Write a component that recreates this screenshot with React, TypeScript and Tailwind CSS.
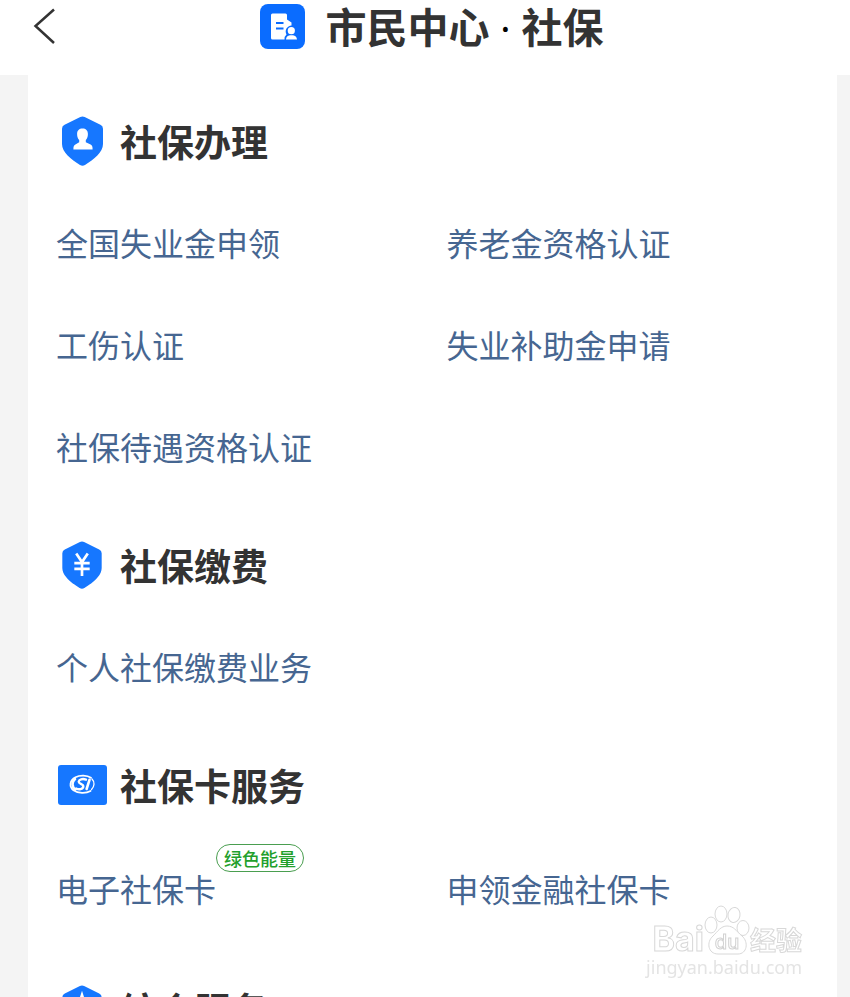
import type { ReactNode } from "react";
import clsx from "clsx";

type Service = { name: string; tag?: string };
type Section = { title: string; icon: ReactNode; services: Service[] };

const SHIELD = "M18.3 1.1Q20.5 0 22.7 1.1L38.4 8.8Q41 10 41 12.8V28C41 36 32 43.5 23 48.9Q20.5 50.4 18 48.9C9 43.5 0 36 0 28V12.8Q0 10 2.6 8.8Z";

function PersonShield() {
  return (
    <svg width="41" height="50" viewBox="0 0 41 50" aria-hidden="true">
      <path d={SHIELD} fill="#1677ff" />
      <path
        d="M20.5 12.5c3.300 0 5.400 2 5.400 5.400 0 2.600-.8 4.900-2.100 6.200v2.200l4.800 2.200c1.600.8 2 2 2 5H11.400c0-3 .4-4.200 2-5l3.800-2.200v-2.200c-1.300-1.300-2.100-3.600-2.100-6.200 0-3.400 2.100-5.400 5.400-5.400z"
        fill="#fff"
      />
    </svg>
  );
}

function YuanShield() {
  return (
    <svg width="40" height="48" viewBox="0 0 41 50" aria-hidden="true">
      <path d={SHIELD} fill="#1677ff" />
      <path d="M14.500 13l6 9 6-9M12.500 23h16M12.500 29h16M20.500 22v14.500" fill="none" stroke="#fff" strokeWidth="2.800" />
    </svg>
  );
}

function StarShield() {
  return (
    <svg width="40" height="48" viewBox="0 0 41 50" aria-hidden="true">
      <path d={SHIELD} fill="#1677ff" />
      <path d="M20.500 6l4 12.500 9 1-7 6 2 9.500-8-5-8 5 2-9.500-7-6 9-1z" fill="#fff" />
    </svg>
  );
}

function SocialCard() {
  return (
    <svg width="49" height="40" viewBox="0 0 49 40" aria-hidden="true">
      <rect width="49" height="40" rx="3" fill="#1677ff" />
      <g fill="none" stroke="#fff" strokeLinecap="round">
        <path d="M33 12.800C29 10.200 22 10 17.500 12.300C11.500 15.400 11 21.500 15.500 25.300C20 28.400 28 28.600 32.500 26" strokeWidth="1.800" />
        <path d="M17 14C13.600 17 13.700 21.500 17.200 24.500" strokeWidth="2.600" />
        <path d="M28 14.600C24.500 13.400 21 14.400 20.700 16.600C20.500 19 25.700 18.700 25.300 21.700C25 24.300 21 24.800 18.200 23.600" strokeWidth="2.400" />
        <path d="M31.500 14.800L28.600 24" strokeWidth="2.600" />
        <path d="M34 14C37 17 36.500 21.500 33.500 24.500" strokeWidth="1.300" />
      </g>
    </svg>
  );
}

function CenterLogo() {
  return (
    <svg width="45" height="45" viewBox="0 0 45 45" aria-hidden="true">
      <rect width="45" height="45" rx="8" fill="#0a6cff" />
      <path d="M12.500 9.500H25.500Q27 9.500 27 11V15.500L31.500 18.500V21.500A6 6 0 0 0 26.500 30.500Q24.500 32 24.500 35.500H12.500Q11 35.500 11 34V11Q11 9.500 12.500 9.500Z" fill="#fff" />
      <path d="M16 19H23.500M16 24.500H23.500" stroke="#0a6cff" strokeWidth="2" />
      <circle cx="31.300" cy="26.700" r="3.600" fill="#fff" />
      <path d="M26 35.500Q26.300 31.800 30 31.300H33Q36.500 31.800 37 35.500Z" fill="#fff" />
    </svg>
  );
}

const SECTIONS: Section[] = [
  {
    title: "社保办理",
    icon: <PersonShield />,
    services: [
      { name: "全国失业金申领" },
      { name: "养老金资格认证" },
      { name: "工伤认证" },
      { name: "失业补助金申请" },
      { name: "社保待遇资格认证" },
    ],
  },
  {
    title: "社保缴费",
    icon: <YuanShield />,
    services: [{ name: "个人社保缴费业务" }],
  },
  {
    title: "社保卡服务",
    icon: <SocialCard />,
    services: [{ name: "电子社保卡", tag: "绿色能量" }, { name: "申领金融社保卡" }],
  },
  { title: "综合服务", icon: <StarShield />, services: [] },
];

function ServiceLink({ s }: { s: Service }) {
  return (
    <li className="flex h-[102px] items-center">
      <a href="#" className="relative whitespace-nowrap text-[32px] leading-10 text-[#466691]">
        {s.name}
        {s.tag && (
          <span className="absolute -top-6 left-full flex h-7 items-center rounded-full border border-[#4a9e50] bg-white px-[7px] text-[18px] font-medium text-[#22a02c]">
            {s.tag}
          </span>
        )}
      </a>
    </li>
  );
}

function ServiceSection({ section }: { section: Section }) {
  const tagged = section.services.some((s) => s.tag);
  return (
    <section className="pb-0.5 pt-4">
      <div className="flex h-[100px] items-center gap-3">
        <span className="flex w-[52px] justify-center">{section.icon}</span>
        <h2 className="text-[37px] font-bold leading-[48px] text-[#333]">{section.title}</h2>
      </div>
      {/* a tag sticks out above its row, so give it some air */}
      <ul className={clsx("grid grid-cols-2", tagged && "py-0.5")}>
        {section.services.map((s) => (
          <ServiceLink key={s.name} s={s} />
        ))}
      </ul>
    </section>
  );
}

function Watermark() {
  return (
    <div className="pointer-events-none absolute bottom-[18px] right-12 flex flex-col items-end text-[#e4e4e4]">
      <div className="flex items-end font-bold text-white">
        <span className="font-[Inter] text-[34px] leading-8 [-webkit-text-stroke:1px_#d8d8d8]">Bai</span>
        <svg width="46" height="50" viewBox="0 0 46 50" aria-hidden="true">
          <g fill="#fff" stroke="#d8d8d8">
            <ellipse cx="7" cy="20" rx="6" ry="8" />
            <ellipse cx="17" cy="9" rx="6" ry="8" />
            <ellipse cx="30" cy="10" rx="6" ry="7.500" transform="rotate(10 30 10)" />
            <ellipse cx="39" cy="23" rx="6" ry="7.500" />
            <path d="M23 21C17 21 14 26 9 31C2 37 4 49 14 49H34C43 49 45 37 38 31C32 26 30 21 23 21Z" />
          </g>
          <text x="23" y="44" textAnchor="middle" fontFamily="Inter" fontSize="20" fontWeight="500" fill="#fff" stroke="#d2d2d2">
            du
          </text>
        </svg>
        <span className="text-[26px] leading-8 [-webkit-text-stroke:1px_#d8d8d8]">经验</span>
      </div>
      <span className="font-['Noto_Sans'] text-[18px] leading-6">jingyan.baidu.com</span>
    </div>
  );
}

export default function App() {
  return (
    <div className="relative flex h-screen flex-col overflow-hidden bg-[#f4f4f4] font-['Noto_Sans_CJK_SC',sans-serif]">
      <header className="relative flex h-[75px] shrink-0 justify-center bg-white pl-[14px]">
        <button type="button" aria-label="返回" className="absolute left-8 top-2 h-9 w-6">
          <svg width="24" height="36" viewBox="0 0 24 36" fill="none" stroke="#333" strokeWidth="2.500" aria-hidden="true">
            <path d="M22 1.500L3.500 18L22 35" />
          </svg>
        </button>
        <div className="flex h-[53px] items-center gap-5">
          <CenterLogo />
          <h1 className="whitespace-nowrap text-[41px] font-bold leading-[53px] text-[#333]">
            市民中心<span className="font-['Open_Sans'] font-normal text-black">{" · "}</span>社保
          </h1>
        </div>
      </header>
      <main className="ml-7 mr-[13px] flex-1 overflow-y-auto bg-white pl-7 [scrollbar-width:none]">
        {SECTIONS.map((section) => (
          <ServiceSection key={section.title} section={section} />
        ))}
      </main>
      <Watermark />
    </div>
  );
}
